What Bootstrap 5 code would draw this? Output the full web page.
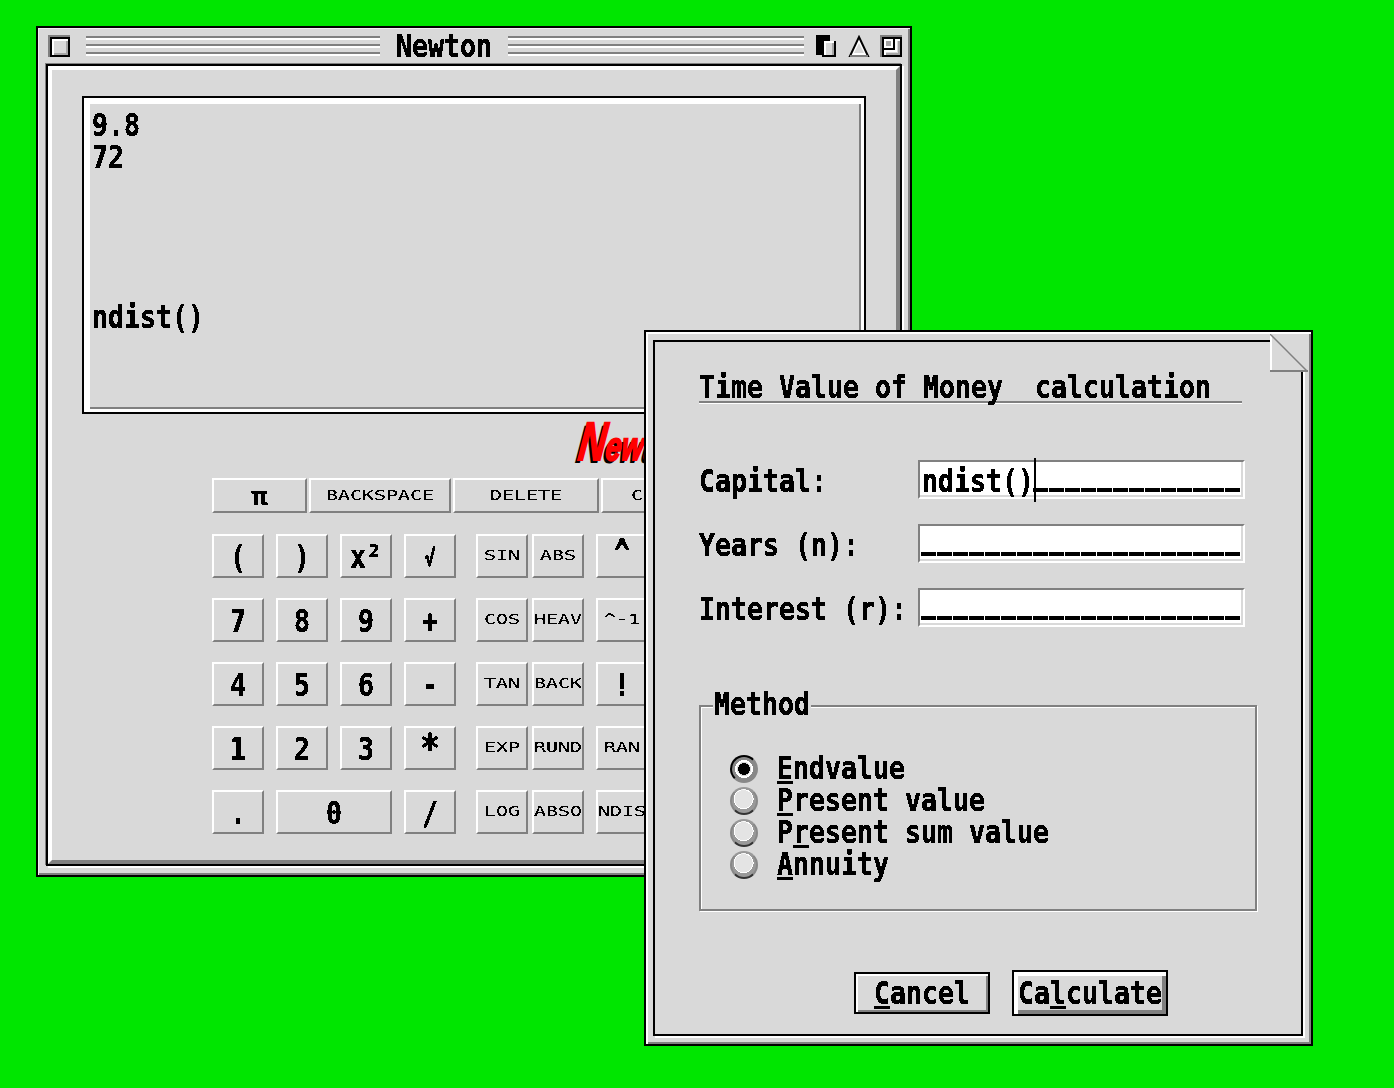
<!DOCTYPE html>
<html lang="en">
<head>
    <meta charset="UTF-8">
    <meta name="viewport" content="width=device-width, initial-scale=1.0">
    <title>Newton</title>
    <link href="https://cdn.jsdelivr.net/npm/bootstrap@5.3.3/dist/css/bootstrap.min.css" rel="stylesheet">
    <script src="https://cdn.jsdelivr.net/npm/bootstrap@5.3.3/dist/js/bootstrap.bundle.min.js"></script>
    <style>
        body { background: #00e600; margin: 0; overflow: hidden; }
        .desk { position: relative; width: 1394px; height: 1088px; }

        /* bitmap system font: 16px cell, tall glyphs */
        .t-big { display: inline-block; font: 700 26.58px/24px "DejaVu Sans Mono", monospace; color: #000; white-space: pre; transform: translateY(1px) scaleY(1.22); filter: url(#crisp); }
        .t-big u { text-decoration-thickness: 2px; text-underline-offset: 2px; }
        .t-small { display: inline-block; font: 400 19.93px/20px "DejaVu Sans Mono", monospace; color: #000; white-space: pre; transform: scaleY(.7); filter: url(#crisp-small); }
        .t-line { height: 32px; display: flex; align-items: center; }
        .t-dash { display: inline-block; font: 700 21.6px/24px "DejaVu Sans Mono", monospace; letter-spacing: 3px; white-space: pre; color: #000; -webkit-text-stroke: 1.5px #000; transform: translateY(-1px); filter: url(#crisp); }
        .t-pi { transform: scaleY(.95); }
        .t-root { font-size: 19px; }
        .t-star { transform: scale(1.25, 1.5); }
        .t-caret { transform: translateY(-1px) scaleY(1.7); }

        /* main window */
        .win-main { left: 36px; top: 26px; width: 876px; height: 851px; background: #d9d9d9; border: 2px solid #000; box-shadow: inset 1px 1px 0 #f2f2f2, inset -2px -2px 0 #808080; }
        .win-bar { height: 36px; padding-left: 10px; }
        .bar-stripes { height: 20px; background: repeating-linear-gradient(#808080 0 2px, #fff 2px 4px, #d9d9d9 4px 8px); }
        .bar-left { width: 294px; margin-left: 16px; }
        .bar-right { width: 296px; }
        .bar-title { width: 128px; text-align: center; }
        .bar-icon { display: block; width: 22px; height: 22px; }
        .bar-tools { margin-left: 12px; gap: 10px; }
        .win-frame { margin: 0 8px; height: 802px; border: 2px solid #000; box-shadow: -1px -1px 0 #808080, 2px 2px 0 #fff; }
        .win-body { height: 798px; border: 4px solid; border-color: #fff #808080 #808080 #fff; padding: 26px 0 0 30px; }

        .calc-display { width: 784px; height: 318px; border: 2px solid #000; padding: 10px 0 0 8px; box-shadow: inset 6px 6px 0 #fff, inset -3px -3px 0 #fff, inset -5px -5px 0 #808080; }
        .logo-row { height: 64px; padding-left: 497px; }
        .logo-text { display: inline-block; font: italic 700 50px/50px "Liberation Sans", sans-serif; color: #f00; -webkit-text-stroke: 2px #f00; text-shadow: -3px 3px 0 #000; transform: translateY(3px) scale(.76, 1.08) skewX(-10deg); transform-origin: left center; white-space: nowrap; }
        .logo-rest { font-size: 37px; }

        .pad { margin-left: 130px; }
        .key-top { gap: 2px; margin-bottom: 21px; }
        .key-row { margin-bottom: 20px; gap: 12px; }
        .key-fn { margin-left: 8px; }
        .key-near { margin-left: -8px; }
        .btn.calc-key { flex: none; display: flex; align-items: center; justify-content: center; width: 52px; height: 44px; padding: 0; background: #d9d9d9; border: 2px solid; border-color: #fff #808080 #808080 #fff; border-radius: 0; }
        .btn.key-zero { width: 116px; }
        .btn.key-thin { height: 35px; }
        .key-pi { width: 95px !important; }
        .key-back { width: 142px !important; }
        .key-del { width: 146px !important; }
        .key-clr { width: 72px !important; }

        /* dialog */
        .dlg { left: 644px; top: 330px; width: 669px; height: 716px; background: #d9d9d9; border: 2px solid #000; box-shadow: inset 2px 2px 0 #fff, inset -2px -2px 0 #808080; padding: 8px 8px 8px 7px; }
        .dlg-in { height: 100%; border: 2px solid #000; box-shadow: 2px 2px 0 #fff; padding: 28px 0 0 44px; }
        .dlg-ear { position: absolute; right: 3px; top: 2px; width: 38px; height: 38px; display: block; }
        .dlg-title { width: 543px; height: 33px; padding-top: 4px; border-bottom: 2px solid #808080; box-shadow: 0 1px 0 #fff; }
        .dlg-rows { margin-top: 57px; gap: 25px; }
        .dlg-label { width: 219px; }
        .form-control.dlg-field { width: 327px; height: 39px; padding: 0 0 0 2px; background: #fff; border-radius: 0; border: 2px solid; border-color: #808080 #fff #fff #808080; box-shadow: inset -2px -2px 0 #d9d9d9; white-space: nowrap; display: flex; align-items: center; }
        .field-caret { position: absolute; left: 335px; top: -2px; width: 2px; height: 44px; background: #000; }
        .dlg-group { position: relative; width: 558px; height: 206px; margin-top: 78px; border: 2px solid #808080; box-shadow: inset 1px 1px 0 #fff, 1px 1px 0 #fff; padding: 46px 0 0 29px; }
        .dlg-legend { position: absolute; left: 12px; top: -18px; width: 98px; height: 32px; background: #d9d9d9; display: flex; align-items: center; justify-content: center; }
        .dlg-legend .t-big { transform: translateY(-1px) scaleY(1.22); }
        .radio-row { height: 32px; gap: 19px; }
        .radio-row .t-big { transform: translateY(-1px) scaleY(1.22); }
        .form-check-input.dlg-radio { flex: none; width: 28px; height: 28px; margin: 0; border: 2px solid; border-color: #999 #888 #333 #888; border-radius: 50%; background: radial-gradient(circle at 48% 42%, #e4e4e4 0 9px, #fff 9px 10px, #999 10px); box-shadow: none; }
        .form-check-input.dlg-radio:checked { background: radial-gradient(circle, #000 0 6px, #d9d9d9 6px 7px, #fff 7px 9px, #888 9px); border-color: #000 #888 #888 #000; }
        .dlg-actions { margin-top: 59px; padding-left: 155px; gap: 22px; }
        .btn.dlg-btn { padding: 0; width: 136px; height: 42px; background: #d9d9d9; border: 2px solid #000; border-radius: 0; box-shadow: inset 2px 2px 0 #fff, inset -2px -2px 0 #808080; display: flex; align-items: center; justify-content: center; }
        .btn.dlg-btn .t-big { transform: scaleY(1.22); }
        .btn.dlg-default { width: 156px; height: 46px; box-shadow: inset 4px 4px 0 #fff, inset -4px -4px 0 #808080; }
    </style>
</head>
<body>
    <svg width="0" height="0" class="position-absolute">
        <filter id="crisp" x="-5%" y="-5%" width="110%" height="110%" color-interpolation-filters="sRGB">
            <feComponentTransfer><feFuncA type="discrete" tableValues="0 1 1 1"/></feComponentTransfer>
        </filter>
        <filter id="crisp-small" x="-5%" y="-5%" width="110%" height="110%" color-interpolation-filters="sRGB">
            <feComponentTransfer><feFuncA type="discrete" tableValues="0 0 1 1 1"/></feComponentTransfer>
        </filter>
    </svg>

    <div class="desk">
        <div class="win-main position-absolute">
            <div class="win-bar d-flex align-items-center">
                <svg class="bar-icon" viewBox="0 0 22 22" shape-rendering="crispEdges">
                    <rect width="22" height="22" fill="#808080"/>
                    <rect x="2" y="2" width="20" height="20" fill="#000"/>
                    <rect x="4" y="4" width="16" height="16" fill="#fff"/>
                    <rect x="6" y="6" width="14" height="14" fill="#a6a6a6"/>
                    <rect x="6" y="6" width="12" height="12" fill="#d9d9d9"/>
                </svg>
                <div class="bar-stripes bar-left"></div>
                <div class="bar-title"><span class="t-big">Newton</span></div>
                <div class="bar-stripes bar-right"></div>
                <div class="d-flex bar-tools">
                    <svg class="bar-icon" viewBox="0 0 22 22" shape-rendering="crispEdges">
                        <rect width="14" height="20" fill="#000"/>
                        <rect x="6" y="6" width="14" height="16" fill="#000"/>
                        <rect x="8" y="6" width="10" height="14" fill="#fff"/>
                        <rect x="10" y="8" width="8" height="12" fill="#d9d9d9"/>
                        <rect x="16" y="8" width="2" height="12" fill="#a6a6a6"/>
                    </svg>
                    <svg class="bar-icon" viewBox="0 0 22 22">
                        <path d="M11 2 L20 21 H2 Z" fill="#fff" stroke="#000" stroke-width="2"/>
                        <path d="M11 8 L16 18 H6 Z" fill="#d9d9d9"/>
                        <path d="M2 21 H20" stroke="#808080" stroke-width="2"/>
                    </svg>
                    <svg class="bar-icon" viewBox="0 0 22 22" shape-rendering="crispEdges">
                        <rect width="22" height="22" fill="#808080"/>
                        <rect x="2" y="2" width="20" height="20" fill="#000"/>
                        <rect x="4" y="4" width="16" height="16" fill="#fff"/>
                        <rect x="6" y="6" width="14" height="14" fill="#d9d9d9"/>
                        <rect x="4" y="4" width="9" height="9" fill="#fff"/>
                        <rect x="6" y="6" width="5" height="5" fill="#a6a6a6"/>
                        <rect x="13" y="4" width="2" height="11" fill="#000"/>
                        <rect x="4" y="13" width="11" height="2" fill="#000"/>
                        <rect x="4" y="15" width="13" height="2" fill="#fff"/>
                        <rect x="15" y="6" width="2" height="9" fill="#fff"/>
                        <rect x="18" y="6" width="2" height="14" fill="#a6a6a6"/>
                        <rect x="6" y="18" width="14" height="2" fill="#a6a6a6"/>
                    </svg>
                </div>
            </div>
            <div class="win-frame">
                <div class="win-body">
                    <div class="calc-display">
                        <div class="t-line"><span class="t-big">9.8</span></div>
                        <div class="t-line"><span class="t-big">72</span></div>
                        <div class="t-line"></div>
                        <div class="t-line"></div>
                        <div class="t-line"></div>
                        <div class="t-line"></div>
                        <div class="t-line"><span class="t-big">ndist()</span></div>
                    </div>
                    <div class="logo-row"><span class="logo-text">N<span class="logo-rest">ewton</span></span></div>
                    <div class="pad">
                        <div class="d-flex key-top">
                            <button class="btn calc-key key-thin key-pi"><span class="t-big t-pi">π</span></button>
                            <button class="btn calc-key key-thin key-back"><span class="t-small">BACKSPACE</span></button>
                            <button class="btn calc-key key-thin key-del"><span class="t-small">DELETE</span></button>
                            <button class="btn calc-key key-thin key-clr"><span class="t-small">C</span></button>
                        </div>
                        <div class="d-flex key-row">
                            <button class="btn calc-key"><span class="t-big">(</span></button>
                            <button class="btn calc-key"><span class="t-big">)</span></button>
                            <button class="btn calc-key"><span class="t-big">x²</span></button>
                            <button class="btn calc-key"><span class="t-big t-root">√</span></button>
                            <button class="btn calc-key key-fn"><span class="t-small">SIN</span></button>
                            <button class="btn calc-key key-near"><span class="t-small">ABS</span></button>
                            <button class="btn calc-key"><span class="t-big t-caret">^</span></button>
                        </div>
                        <div class="d-flex key-row">
                            <button class="btn calc-key"><span class="t-big">7</span></button>
                            <button class="btn calc-key"><span class="t-big">8</span></button>
                            <button class="btn calc-key"><span class="t-big">9</span></button>
                            <button class="btn calc-key"><span class="t-big">+</span></button>
                            <button class="btn calc-key key-fn"><span class="t-small">COS</span></button>
                            <button class="btn calc-key key-near"><span class="t-small">HEAV</span></button>
                            <button class="btn calc-key"><span class="t-small">^-1</span></button>
                        </div>
                        <div class="d-flex key-row">
                            <button class="btn calc-key"><span class="t-big">4</span></button>
                            <button class="btn calc-key"><span class="t-big">5</span></button>
                            <button class="btn calc-key"><span class="t-big">6</span></button>
                            <button class="btn calc-key"><span class="t-big">-</span></button>
                            <button class="btn calc-key key-fn"><span class="t-small">TAN</span></button>
                            <button class="btn calc-key key-near"><span class="t-small">BACK</span></button>
                            <button class="btn calc-key"><span class="t-big">!</span></button>
                        </div>
                        <div class="d-flex key-row">
                            <button class="btn calc-key"><span class="t-big">1</span></button>
                            <button class="btn calc-key"><span class="t-big">2</span></button>
                            <button class="btn calc-key"><span class="t-big">3</span></button>
                            <button class="btn calc-key"><span class="t-big t-star">*</span></button>
                            <button class="btn calc-key key-fn"><span class="t-small">EXP</span></button>
                            <button class="btn calc-key key-near"><span class="t-small">RUND</span></button>
                            <button class="btn calc-key"><span class="t-small">RAN</span></button>
                        </div>
                        <div class="d-flex key-row">
                            <button class="btn calc-key"><span class="t-big">.</span></button>
                            <button class="btn calc-key key-zero"><span class="t-big">0</span></button>
                            <button class="btn calc-key"><span class="t-big">/</span></button>
                            <button class="btn calc-key key-fn"><span class="t-small">LOG</span></button>
                            <button class="btn calc-key key-near"><span class="t-small">ABSO</span></button>
                            <button class="btn calc-key"><span class="t-small">NDIS</span></button>
                        </div>
                    </div>
                </div>
            </div>
        </div>

        <div class="dlg position-absolute">
            <div class="dlg-in">
                <div class="dlg-title"><span class="t-big">Time Value of Money  calculation</span></div>
                <div class="dlg-rows d-flex flex-column">
                    <div class="d-flex align-items-center position-relative">
                        <div class="dlg-label d-flex"><span class="t-big">Capital:</span></div>
                        <div class="form-control dlg-field"><span class="t-big">ndist()</span><span class="t-dash">_____________</span></div>
                        <div class="field-caret"></div>
                    </div>
                    <div class="d-flex align-items-center">
                        <div class="dlg-label d-flex"><span class="t-big">Years (n):</span></div>
                        <div class="form-control dlg-field"><span class="t-dash">____________________</span></div>
                    </div>
                    <div class="d-flex align-items-center">
                        <div class="dlg-label d-flex"><span class="t-big">Interest (r):</span></div>
                        <div class="form-control dlg-field"><span class="t-dash">____________________</span></div>
                    </div>
                </div>
                <div class="dlg-group">
                    <div class="dlg-legend"><span class="t-big">Method</span></div>
                    <div class="d-flex align-items-center radio-row"><input class="form-check-input dlg-radio" type="radio" name="method" checked><span class="t-big"><u>E</u>ndvalue</span></div>
                    <div class="d-flex align-items-center radio-row"><input class="form-check-input dlg-radio" type="radio" name="method"><span class="t-big"><u>P</u>resent value</span></div>
                    <div class="d-flex align-items-center radio-row"><input class="form-check-input dlg-radio" type="radio" name="method"><span class="t-big">P<u>r</u>esent sum value</span></div>
                    <div class="d-flex align-items-center radio-row"><input class="form-check-input dlg-radio" type="radio" name="method"><span class="t-big"><u>A</u>nnuity</span></div>
                </div>
                <div class="dlg-actions d-flex align-items-center">
                    <button class="btn dlg-btn"><span class="t-big"><u>C</u>ancel</span></button>
                    <button class="btn dlg-btn dlg-default"><span class="t-big">Ca<u>l</u>culate</span></button>
                </div>
            </div>
            <svg class="dlg-ear" viewBox="0 0 38 38" shape-rendering="crispEdges">
                <rect width="38" height="38" fill="#d9d9d9"/>
                <path d="M0 0 H2 V36 H38 V38 H0 Z" fill="#fff"/>
                <path d="M0 36 H38 V38 H0 Z" fill="#808080"/>
                <path d="M0 0 L38 38" stroke="#808080" stroke-width="1.5" shape-rendering="auto"/>
            </svg>
        </div>
    </div>
</body>
</html>
